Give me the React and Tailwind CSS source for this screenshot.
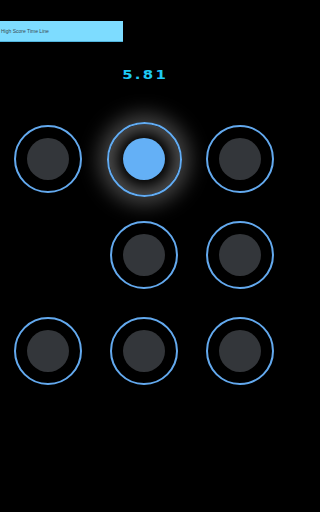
import React from 'react';

// which pads are lit
const pads = [false, true, false, null, false, false, false, false, false];

const Pad = ({ lit }) => {
  if (lit === null) return <div className="w-[96px] h-[96px]" />;

  if (lit) {
    return (
      <div className="w-[96px] h-[96px] flex items-center justify-center">
        <div className="w-[75px] h-[75px] rounded-full border-2 border-[#63acf2] flex items-center justify-center shadow-[0_0_20px_8px_rgba(120,120,120,0.55),inset_0_0_14px_8px_rgba(120,120,120,0.6)]">
          <div className="w-[42px] h-[42px] rounded-full bg-[#64b0f6]" />
        </div>
      </div>
    );
  }

  return (
    <div className="w-[96px] h-[96px] flex items-center justify-center">
      <div className="w-[68px] h-[68px] rounded-full border-2 border-[#63a9ee] flex items-center justify-center">
        <div className="w-[42px] h-[42px] rounded-full bg-[#33363a]" />
      </div>
    </div>
  );
};

export default function App() {
  return (
    <div className="w-full min-h-screen bg-black">
      <div className="w-[288px] h-[512px] bg-black overflow-hidden flex flex-col">
        {/* time line bar */}
        <div className="mt-[21px] w-[123px] h-[21px] bg-[#7ddcff] border-b border-[#52b4dc] flex items-center pl-[1px]">
          <span className="text-[5px] leading-none text-[#3a4a52] font-['Liberation_Sans',sans-serif]">
            High Score Time Line
          </span>
        </div>

        {/* score */}
        <div className="mt-[26px] h-[14px] flex justify-center">
          <span className="text-[13px] leading-[14px] font-black tracking-[2px] text-[#1ec9f4] font-['DejaVu_Sans',sans-serif] pl-[2px] scale-x-[1.15]">
            5.81
          </span>
        </div>

        {/* pads */}
        <div className="mt-[29px] grid grid-cols-3 w-[288px]">
          {pads.map((lit, i) => (
            <Pad key={i} lit={lit} />
          ))}
        </div>
      </div>
    </div>
  );
}
